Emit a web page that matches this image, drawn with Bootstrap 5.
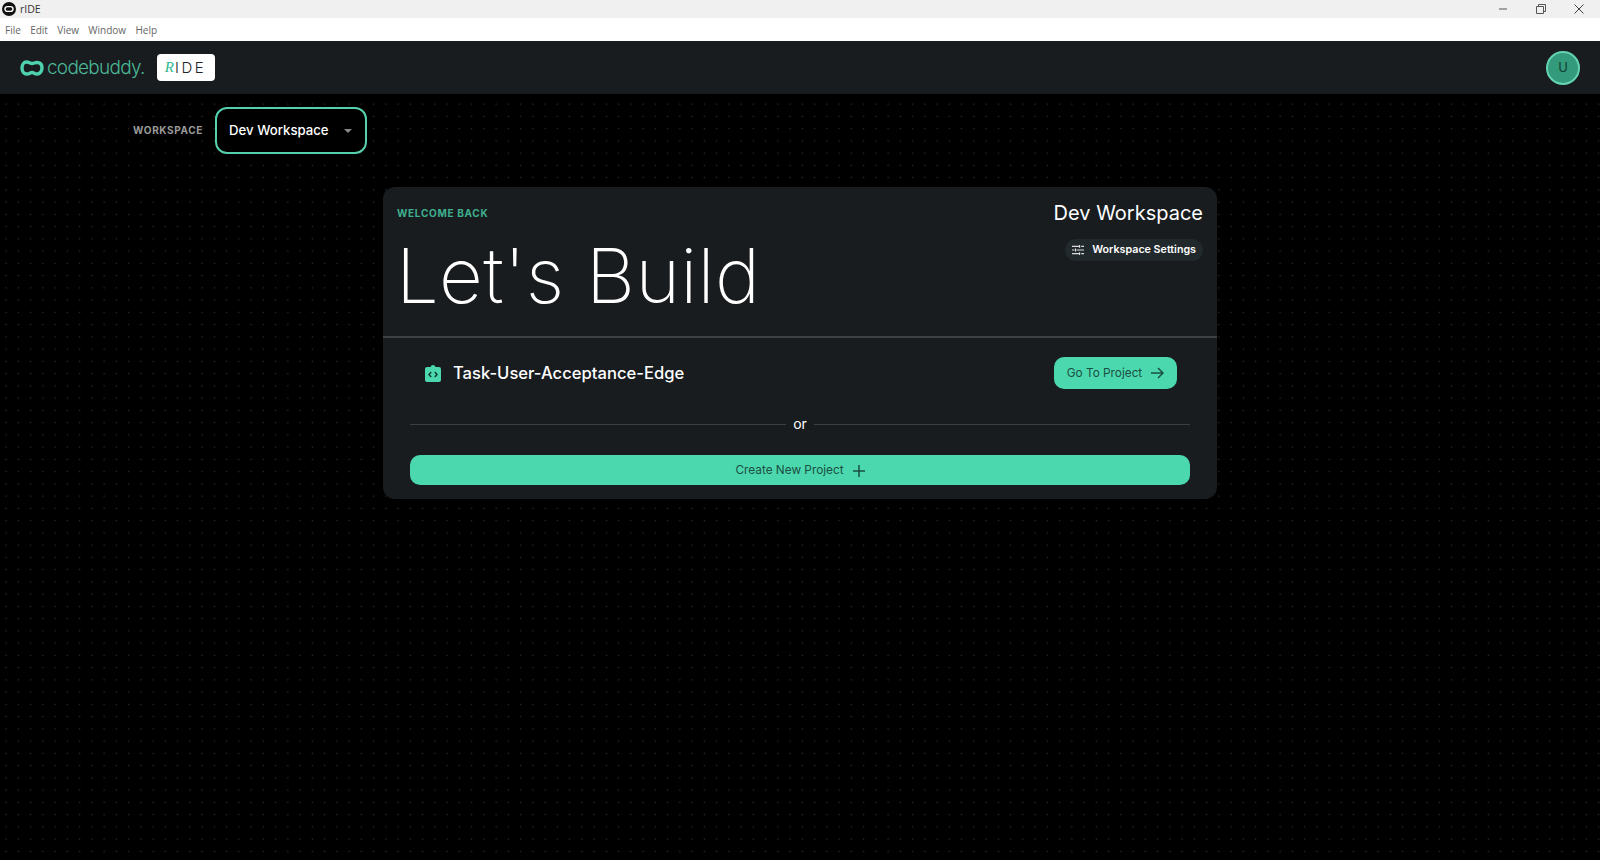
<!doctype html>
<html lang="en">
  <head>
    <meta charset="UTF-8" />
    <title>rIDE</title>
    <link
      href="https://cdn.jsdelivr.net/npm/bootstrap@5.3.2/dist/css/bootstrap.min.css"
      rel="stylesheet"
    />
    <style>
      html, body { height: 100%; }
      body {
        background-color: #000;
        background-image: radial-gradient(circle at center, #2a2a2a 0.8px, transparent 1px);
        background-size: 12.25px 12.25px;
        font-family: Inter, "Liberation Sans", sans-serif;
        color: #fff;
        overflow: hidden;
      }
      .win-title { height: 18px; background: #f0f0f0; color: #333; font: 10.5px "Open Sans", sans-serif; padding-left: 2px; }
      .win-title span { margin-left: 4px; }
      .win-ctrl { padding-right: 2px; }
      .win-ctrl svg { display: block; margin: 0 14px; }
      .win-menu { height: 23px; background: #fff; color: #666; font: 10px "Open Sans", sans-serif; padding-left: 5px; gap: 9.300px; }
      .top-bar { height: 53px; background: #181c1f; padding: 0 20px; }
      .brand-word { color: #4bb897; font: 300 19px Inter, sans-serif; letter-spacing: -0.75px; margin-left: 3px; }
      .ide-tag { width: 58px; height: 27px; margin-left: 12px; background: #fff; border-radius: 4px; color: #222; font: 300 15px Inter, sans-serif; letter-spacing: 2.6px; }
      .ide-tag i { color: #2fb98f; font-family: "Liberation Serif", serif; letter-spacing: 0; margin-right: 1px; }
      .user-dot { width: 34px; height: 34px; background: #339b7c; border: 2px solid #63d3b1; color: #123d31; font-size: 13px; }
      .ws-row { padding: 13px 0 0 133px; gap: 12px; }
      .ws-label { color: #9a9a9a; font-size: 10px; font-weight: 700; letter-spacing: 0.65px; }
      .ws-btn.btn { width: 152px; height: 47px; padding: 0 0 0 12px; --bs-btn-color: #fff; --bs-btn-hover-color: #fff; border: 2px solid #55cfac; border-radius: 12px; background: #000; font-size: 13.2px; font-weight: 500; }
      .ws-btn.dropdown-toggle::after { color: #888; border-top-width: 4px; border-right-width: 4px; border-left-width: 4px; margin-left: 15px; vertical-align: 0; }
      .main-card { width: 834px; height: 312px; margin: 33px auto 0; background: #181c1f; border-radius: 12px; }
      .hero { height: 151px; border-bottom: 2px solid #3d4244; padding: 14px 14px 0 14px; }
      .hello { color: #3fb08f; font-size: 10px; font-weight: 700; letter-spacing: 0.7px; margin-top: 5px; }
      .hero-title { font-size: 76px; font-weight: 200; line-height: 1; margin: 16px 0 0 -1px; letter-spacing: 0.3px; }
      .ws-name { font-size: 20px; font-weight: 400; line-height: 24px; }
      .ws-settings { height: 22px; margin-top: 14px; padding: 0 7px; background: #21292d; border-radius: 11px; font-size: 10.7px; font-weight: 600; gap: 8px; }
      .proj-row { padding: 19px 40px 0 42px; }
      .proj-name { font-size: 16.6px; font-weight: 500; margin-left: 12px; }
      .mint-btn.btn { --bs-btn-color: #1c4f42; --bs-btn-hover-color: #1c4f42; background: #4bd8af; border: 0; border-radius: 10px; font-size: 11.8px; gap: 9px; padding: 0; }
      .mint-btn span { padding-top: 1px; }
      .go-btn { width: 123px; height: 32px; }
      .or-row { margin: 27px 27px 0; gap: 7px; font-size: 14px; line-height: 16px; }
      .or-row hr { flex: 1; margin: 0; border-top: 1px solid #3a3f41; opacity: 1; }
      .mint-btn.new-btn { height: 30px; margin: 23px 27px 0; padding-top: 1px; width: calc(100% - 54px); }
    </style>
  </head>
  <body>
    <div class="win-title d-flex align-items-center justify-content-between">
      <div class="d-flex align-items-center">
        <svg width="14" height="14" viewBox="0 0 14 14">
          <circle cx="7" cy="7" r="7" fill="#111" />
          <rect x="3" y="4.600" width="8" height="4.800" rx="2.400" fill="none" stroke="#fff" stroke-width="1.400" />
        </svg>
        <span>rIDE</span>
      </div>
      <div class="win-ctrl d-flex">
        <svg width="10" height="10" viewBox="0 0 10 10"><path d="M1 5h8" stroke="#555" /></svg>
        <svg width="10" height="10" viewBox="0 0 10 10"><path d="M.5 2.500h7v7h-7zM2.500 2.500v-2h7v7h-2" fill="none" stroke="#555" /></svg>
        <svg width="10" height="10" viewBox="0 0 10 10"><path d="M.5.5l9 9M9.500.5l-9 9" stroke="#444" /></svg>
      </div>
    </div>
    <div class="win-menu d-flex align-items-center">
      <span>File</span><span>Edit</span><span>View</span><span>Window</span><span>Help</span>
    </div>

    <nav class="top-bar d-flex align-items-center">
      <svg width="24" height="18" viewBox="0 0 24 18">
        <path d="M6.500 3C9 3 10 4.500 12 4.500C14 4.500 15 3.200 17.500 3.500C20.500 3.800 22 6.200 22 9C22 12.500 19.500 15 17 15C14.500 15 14 13.500 12 13.500C10 13.500 9.500 15 7 15C4 15 2 12.500 2 9C2 5.500 4 3 6.500 3Z" fill="none" stroke="#4fd1ae" stroke-width="3.400" />
      </svg>
      <span class="brand-word">codebuddy.</span>
      <div class="ide-tag d-flex align-items-center justify-content-center"><i>R</i>IDE</div>
      <div class="user-dot rounded-circle d-flex align-items-center justify-content-center ms-auto">U</div>
    </nav>

    <div class="ws-row d-flex align-items-center">
      <span class="ws-label">WORKSPACE</span>
      <button class="ws-btn btn dropdown-toggle d-flex align-items-center" type="button" data-bs-toggle="dropdown">Dev Workspace</button>
      <ul class="dropdown-menu">
        <li><a class="dropdown-item" href="#">Dev Workspace</a></li>
      </ul>
    </div>

    <div class="main-card">
      <div class="hero d-flex justify-content-between">
        <div>
          <div class="hello">WELCOME BACK</div>
          <div class="hero-title">Let's Build</div>
        </div>
        <div class="d-flex flex-column align-items-end">
          <div class="ws-name">Dev Workspace</div>
          <div class="ws-settings d-flex align-items-center">
            <svg width="12" height="12" viewBox="0 0 13 12" fill="none" stroke="#ddd" stroke-width="1.300">
              <path d="M0 2h7.500M10 2h3M0 6h2.500M5 6h8M0 10h7.500M10 10h3M8.200 .5v3M3.800 4.500v3M8.200 8.500v3" />
            </svg>
            <span>Workspace Settings</span>
          </div>
        </div>
      </div>

      <div class="proj-row d-flex align-items-center justify-content-between">
        <div class="d-flex align-items-center">
          <svg width="16" height="18" viewBox="0 0 16 18">
            <path d="M2 3h3.500a2.600 2.600 0 0 1 5 0H14a2 2 0 0 1 2 2V16a2 2 0 0 1-2 2H2a2 2 0 0 1-2-2V5a2 2 0 0 1 2-2z" fill="#4bd8af" />
            <path d="M6.200 8L4 10.500l2.200 2.500M9.800 8L12 10.500l-2.200 2.500" fill="none" stroke="#123d31" stroke-width="1.500" />
          </svg>
          <span class="proj-name">Task-User-Acceptance-Edge</span>
        </div>
        <button class="mint-btn go-btn btn d-flex align-items-center justify-content-center" type="button">
          <span>Go To Project</span>
          <svg width="13" height="12" viewBox="0 0 13 12" fill="none" stroke="#1c4f42" stroke-width="1.500">
            <path d="M0 6h12M7 1l5 5-5 5" />
          </svg>
        </button>
      </div>

      <div class="or-row d-flex align-items-center">
        <hr />
        <span>or</span>
        <hr />
      </div>

      <button class="mint-btn new-btn btn d-flex align-items-center justify-content-center" type="button">
        <span>Create New Project</span>
        <svg width="12" height="12" viewBox="0 0 12 12" fill="none" stroke="#1c4f42" stroke-width="1.500">
          <path d="M6 0v12M0 6h12" />
        </svg>
      </button>
    </div>

    <script src="https://cdn.jsdelivr.net/npm/bootstrap@5.3.2/dist/js/bootstrap.bundle.min.js"></script>
  </body>
</html>
